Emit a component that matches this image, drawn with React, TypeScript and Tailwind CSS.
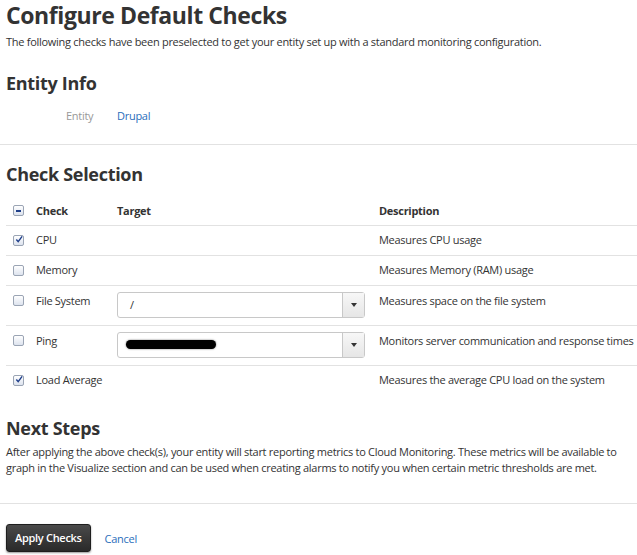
import React from "react";

const font = { fontFamily: '"Open Sans", "Noto Sans", sans-serif' };

function Box({ state }: { state: "on" | "off" | "mixed" }) {
  return (
    <span className="inline-flex h-[11px] w-[11px] items-center justify-center rounded-[2px] border border-[#9aa4b4] bg-gradient-to-b from-white to-[#dde3ee]">
      {state === "on" && (
        <svg width="9" height="9" viewBox="0 0 9 9" className="-mt-[2px] ml-[1px]">
          <path d="M1.5 4.5 L3.6 7 L8 1" stroke="#1f3f8a" strokeWidth="1.6" fill="none" />
        </svg>
      )}
      {state === "mixed" && <span className="h-[2px] w-[5px] bg-[#1f3f8a]" />}
    </span>
  );
}

function Select({ children }: { children?: React.ReactNode }) {
  return (
    <div className="flex h-[26px] w-[248px] items-stretch rounded-[3px] border border-[#c8c8c8] bg-white">
      <div className="flex flex-1 items-center pl-[12px] text-[11px] text-[#333]">{children}</div>
      <div className="flex w-[22px] items-center justify-center border-l border-[#c8c8c8] bg-gradient-to-b from-[#f7f7f7] to-[#e6e6e6]">
        <svg width="6" height="4" viewBox="0 0 6 4">
          <path d="M0 0 L6 0 L3 4 Z" fill="#333" />
        </svg>
      </div>
    </div>
  );
}

const rows = [
  { name: "CPU", on: true, target: null, desc: "Measures CPU usage" },
  { name: "Memory", on: false, target: null, desc: "Measures Memory (RAM) usage" },
  { name: "File System", on: false, target: "slash", desc: "Measures space on the file system" },
  { name: "Ping", on: false, target: "redacted", desc: "Monitors server communication and response times" },
  { name: "Load Average", on: true, target: null, desc: "Measures the average CPU load on the system" },
];

export default function App() {
  return (
    <div style={font} className="min-h-[555px] w-[637px] bg-white text-[11px] tracking-[-0.28px] text-[#333]">
      <div className="px-[6px]">
        <h1 className="pt-[1px] text-[23px] font-bold leading-[28px] tracking-[-0.4px] text-[#333]">
          Configure Default Checks
        </h1>
        <p className="mt-[5px] text-[11px] leading-[16px]">
          The following checks have been preselected to get your entity set up with a standard monitoring configuration.
        </p>

        <h2 className="mt-[21px] text-[18px] font-bold leading-[24px] tracking-[-0.3px]">Entity Info</h2>
        <div className="mt-[13px] flex text-[11px] leading-[16px]">
          <span className="ml-[60px] w-[51px] text-[#999]">Entity</span>
          <span className="text-[#2a6ebb]">Drupal</span>
        </div>
      </div>

      <div className="mt-[20px] border-t border-[#e2e2e2]" />

      <div className="pl-[6px]">
        <h2 className="mt-[17px] text-[18px] font-bold leading-[24px] tracking-[-0.3px]">Check Selection</h2>

        <table className="mt-[11px] w-full border-collapse text-left text-[11px] leading-[16px]">
          <thead>
            <tr className="border-b border-[#e2e2e2]">
              <th className="h-[28px] w-[30px] pl-[7px] align-middle font-normal">
                <span className="flex"><Box state="mixed" /></span>
              </th>
              <th className="w-[81px] align-middle font-bold">Check</th>
              <th className="w-[262px] align-middle font-bold">Target</th>
              <th className="align-middle font-bold">Description</th>
            </tr>
          </thead>
          <tbody>
            {rows.map((r, i) => (
              <tr key={r.name} className={i < rows.length - 1 ? "border-b border-[#e2e2e2]" : ""}>
                <td className={"pl-[7px] " + (r.target ? "pt-[9px] align-top" : "h-[30px] align-middle")}>
                  <span className="flex"><Box state={r.on ? "on" : "off"} /></span>
                </td>
                <td className={r.target ? "pt-[7px] align-top" : "align-middle"}>{r.name}</td>
                <td className={r.target ? "pt-[6px] pb-[7px] align-top" : "align-middle"}>
                  {r.target === "slash" && <Select>/</Select>}
                  {r.target === "redacted" && (
                    <Select>
                      <span className="-ml-[4px] h-[9px] w-[90px] rounded-full bg-black shadow-[0_0_2px_rgba(0,0,0,0.6)]" />
                    </Select>
                  )}
                </td>
                <td className={"whitespace-nowrap " + (r.target ? "pt-[7px] align-top" : "align-middle")}>{r.desc}</td>
              </tr>
            ))}
          </tbody>
        </table>
      </div>

      <div className="px-[6px]">
        <h2 className="mt-[21px] text-[18px] font-bold leading-[24px] tracking-[-0.3px]">Next Steps</h2>
        <p className="mt-[4px] text-[11px] leading-[16px]">
          After applying the above check(s), your entity will start reporting metrics to Cloud Monitoring. These metrics will be available to graph in the Visualize section and can be used when creating alarms to notify you when certain metric thresholds are met.
        </p>
      </div>

      <div className="mt-[27px] border-t border-[#e2e2e2]" />

      <div className="flex items-center px-[6px] pt-[20px]">
        <button className="h-[28px] rounded-[3px] border border-[#1e1e1e] bg-gradient-to-b from-[#4a4a4a] to-[#2a2a2a] px-[8px] text-[11px] font-semibold tracking-[-0.3px] text-white shadow-[0_1px_2px_rgba(0,0,0,0.4)]">
          Apply Checks
        </button>
        <a className="ml-[14px] mt-[2px] text-[11px] text-[#2a6ebb]">Cancel</a>
      </div>
    </div>
  );
}
